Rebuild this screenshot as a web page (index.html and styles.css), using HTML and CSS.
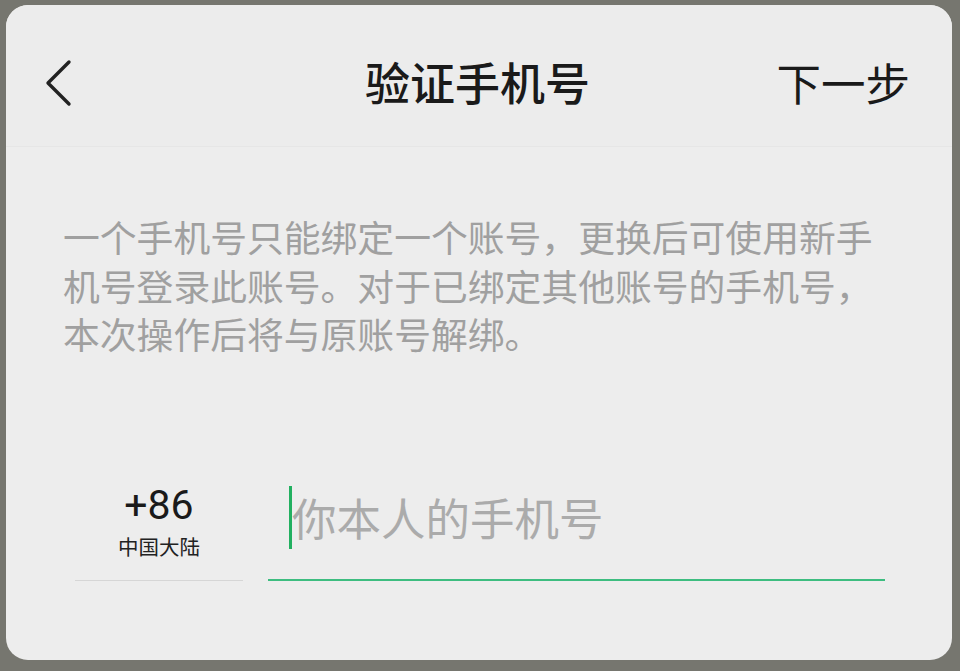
FILE: index.html
```html
<!DOCTYPE html>
<html lang="zh-CN">
<head>
<meta charset="utf-8">
<title>验证手机号</title>
<link rel="stylesheet" href="styles.css">
</head>
<body>
<div class="card">
  <header class="header">
    <div class="back">
      <svg width="28" height="48" viewBox="0 0 28 48" aria-hidden="true">
        <path d="M24 3 L3 24 L24 45" fill="none" stroke="#222" stroke-width="3.4" stroke-linecap="round" stroke-linejoin="round"/>
      </svg>
    </div>
    <h1 class="title">验证手机号</h1>
    <div class="next">下一步</div>
  </header>
  <p class="desc">一个手机号只能绑定一个账号，更换后可使用新手机号登录此账号。对于已绑定其他账号的手机号，本次操作后将与原账号解绑。</p>
  <div class="phone-row">
    <div class="country">
      <div class="code">+86</div>
      <div class="region">中国大陆</div>
    </div>
    <div class="input">
      <span class="caret"></span>
      <span class="placeholder">你本人的手机号</span>
    </div>
  </div>
</div>
</body>
</html>
```

FILE: styles.css
```css
* { box-sizing: border-box; }
html, body { margin: 0; }
body {
  width: 960px;
  height: 671px;
  background: #76766f;
  padding: 5px 8px 11px 6px;
  font-family: "Noto Sans CJK SC", "Noto Sans", sans-serif;
  overflow: hidden;
}
.card {
  width: 946px;
  height: 655px;
  background: #ededed;
  border-radius: 22px;
  overflow: hidden;
}
.header {
  height: 142px;
  padding: 47px 42px 0 39px;
  display: grid;
  grid-template-columns: 1fr auto 1fr;
  align-items: start;
  border-bottom: 1px solid #e6e6e6;
  background: #ececec;
}
.back {
  height: 60px;
  display: flex;
  align-items: center;
}
.back svg { display: block; margin-top: 2px; }
.title {
  margin: 0;
  height: 60px;
  line-height: 60px;
  font-size: 45px;
  font-weight: 500;
  color: #1a1a1a;
}
.next {
  justify-self: end;
  height: 60px;
  line-height: 60px;
  font-size: 44.5px;
  color: #1a1a1a;
}
.desc {
  margin: 65px 0 0 57px;
  width: 830px;
  font-size: 36.8px;
  line-height: 48.5px;
  color: #a0a0a0;
}
.phone-row {
  margin: 124px 67px 0 69px;
  display: flex;
  align-items: flex-end;
  gap: 25px;
}
.country {
  width: 168px;
  text-align: center;
  padding-bottom: 21px;
  border-bottom: 1px solid #d6d6d6;
}
.code {
  font-family: Roboto, "Noto Sans", sans-serif;
  font-size: 41px;
  line-height: 44px;
  color: #1a1a1a;
  margin-bottom: 6px;
}
.region {
  font-size: 20.5px;
  line-height: 26px;
  color: #222;
}
.input {
  flex: 1;
  display: flex;
  align-items: center;
  padding: 4px 0 30px 21px;
  border-bottom: 2px solid #3dbd80;
}
.caret {
  width: 3px;
  height: 63px;
  background: #22b060;
  flex: none;
}
.placeholder {
  font-size: 44.5px;
  line-height: 60px;
  color: #ababab;
}
```
